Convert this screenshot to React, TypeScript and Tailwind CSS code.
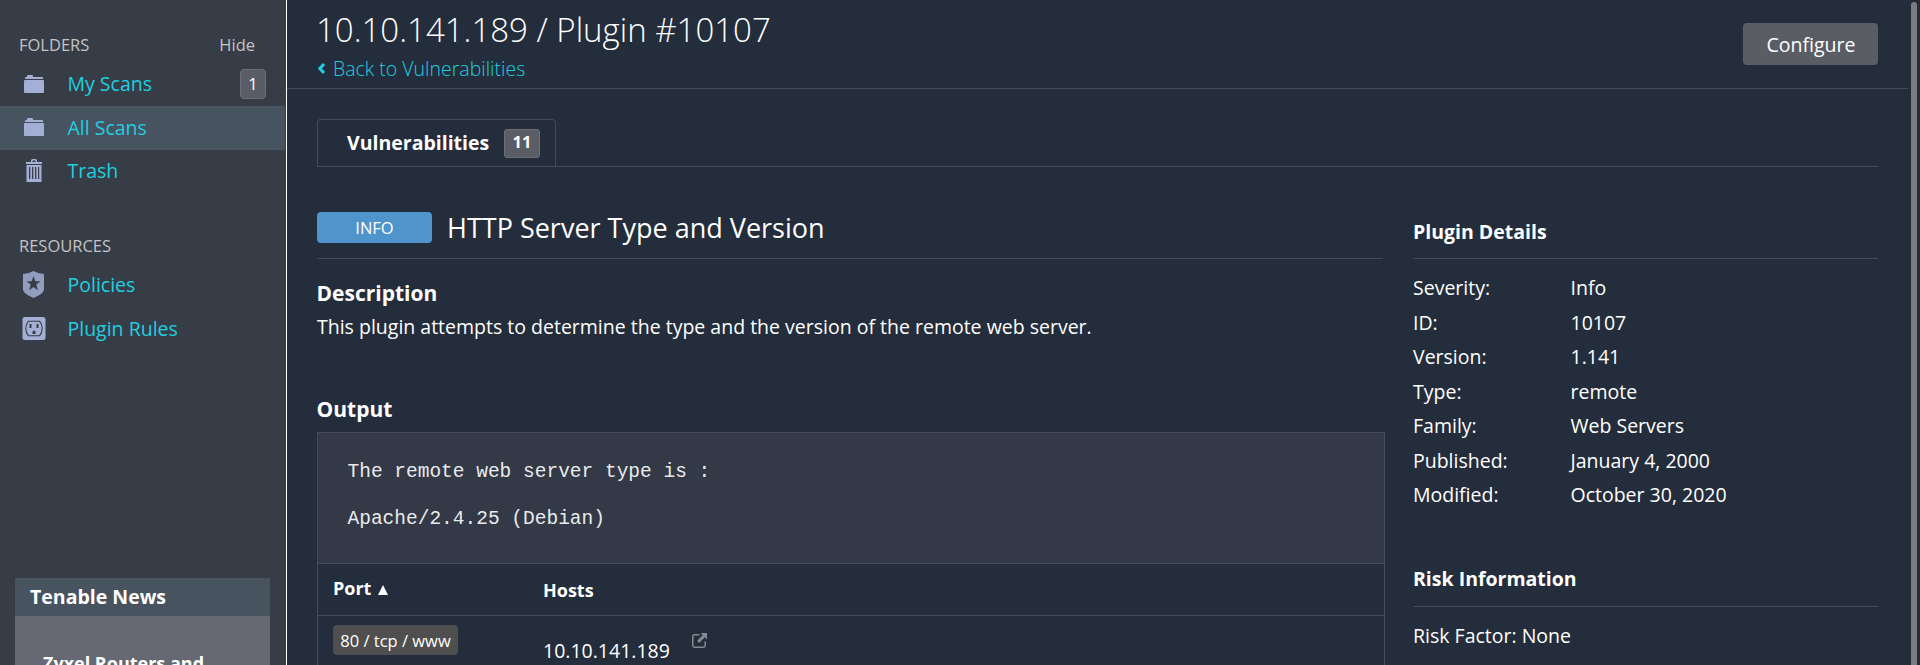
import type { ReactNode } from "react";

const details = [
  ["Severity:", "Info"],
  ["ID:", "10107"],
  ["Version:", "1.141"],
  ["Type:", "remote"],
  ["Family:", "Web Servers"],
  ["Published:", "January 4, 2000"],
  ["Modified:", "October 30, 2020"],
];

function FolderIcon() {
  return (
    <svg width="20" height="18" viewBox="0 0 20 18" fill="#a3afd5">
      <path d="M1 4V2.6Q1 2 1.7 2H3V1Q3 0 4 0H8Q9 0 9 1V2H18.3Q19 2 19 2.6V4Z" />
      <path d="M0 6Q0 5 1 5H19Q20 5 20 6V17Q20 18 19 18H1Q0 18 0 17Z" />
    </svg>
  );
}

function TrashIcon() {
  return (
    <svg width="16" height="23" viewBox="0 0 16 23" fill="#a3afd5">
      <path fillRule="evenodd" d="M5 3V1.5Q5 0 6.5 0H9.500Q11 0 11 1.500V3H16V5H0V3ZM6.500 3H9.500V1.500H6.500Z" />
      <path fillRule="evenodd" d="M0.500 6H15.500V23H0.500ZM3 8V20H4.300V8ZM6 8V20H7.300V8ZM9 8V20H10.300V8ZM12 8V20H13.200V8Z" />
    </svg>
  );
}

function ShieldIcon() {
  return (
    <svg width="21" height="27" viewBox="0 0 21 27" fill="#919cbf">
      <path
        fillRule="evenodd"
        d="M10.500 0Q15 2.600 21 3V19Q20 22 16 24.300L10.500 27L5 24.300Q1 22 0 19V3Q6 2.600 10.500 0ZM10.500 5L8.700 10.300H3.500L7.700 13.600L6.200 19.300L10.500 16L14.800 19.300L13.300 13.600L17.500 10.300H12.300Z"
      />
    </svg>
  );
}

function OutletIcon() {
  return (
    <svg width="24" height="23" viewBox="0 0 24 23" fill="none">
      <rect x="0.500" width="23" height="23" rx="2.500" fill="#a3afd5" />
      <path d="M6.500 4.200H17.500Q20.200 7.200 20.200 11.500T17.500 18.800H6.500Q3.800 15.800 3.800 11.500T6.500 4.200Z" stroke="#373d47" strokeWidth="1.100" />
      <path d="M7.500 7H9.500V11H7.500ZM14.500 7H16.500V11H14.500ZM10.500 17V15A1.500 1.500 0 0 1 13.500 15V17Z" fill="#373d47" />
    </svg>
  );
}

function NavItem({ icon, label, count, active }: { icon: ReactNode; label: string; count?: string; active?: boolean }) {
  return (
    <a className={`flex h-[43.5px] w-[285px] items-center pr-[19px] text-[#1fcfe0] ${active ? "bg-[#485360]" : ""}`}>
      <span className="flex w-[67.500px] shrink-0 justify-center pb-px">{icon}</span>
      <span className="flex-1 pb-[0.5px]">{label}</span>
      {count && (
        <span className="flex h-[30px] w-[26px] items-center justify-center rounded-[4px] border border-[#6c6d76] bg-[#5b5d66] text-[16.5px] text-white">
          {count}
        </span>
      )}
    </a>
  );
}

function Sidebar() {
  return (
    <aside className="flex h-full w-[287px] shrink-0 flex-col border-r border-white bg-[#373d47]">
      <div className="mt-[29px] flex h-[33.500px] shrink-0 justify-between pr-[31px] pl-[19px] text-[16.5px] leading-[32px] text-[#c3c3c3]">
        <span>FOLDERS</span>
        <span>Hide</span>
      </div>
      <nav className="shrink-0">
        <NavItem icon={<FolderIcon />} label="My Scans" count="1" />
        <NavItem icon={<FolderIcon />} label="All Scans" active />
        <NavItem icon={<TrashIcon />} label="Trash" />
      </nav>
      <div className="mt-[37px] h-[33.25px] shrink-0 pl-[19px] text-[16.5px] leading-[32px] text-[#c3c3c3]">RESOURCES</div>
      <nav className="shrink-0">
        <NavItem icon={<ShieldIcon />} label="Policies" />
        <NavItem icon={<OutletIcon />} label="Plugin Rules" />
      </nav>
      <section className="mt-[227.75px] ml-[15px] h-[87px] w-[255px] shrink-0 overflow-hidden bg-[#666873] font-bold text-white">
        <h3 className="h-[38px] bg-[#485360] pl-[15px] leading-[37px]">Tenable News</h3>
        <p className="pt-[27px] pl-[28px] text-[18px] leading-[40px]">Zyxel Routers and</p>
      </section>
    </aside>
  );
}

function Header() {
  return (
    <header className="flex h-[89px] justify-between border-b border-[#444b57] pr-[30px] pl-[30px]">
      <div className="font-light">
        <h1 className="-ml-px h-[51px] pt-[8px] text-[33px] leading-[44px] text-white">10.10.141.189 / Plugin #10107</h1>
        <a className="flex items-center gap-[8px] pl-px leading-[35px] text-[#1fcfe0]">
          <svg width="7" height="11" viewBox="0 0 7 11" fill="none" stroke="#1fcfe0" strokeWidth="3">
            <path d="M6 1L1.800 5.500L6 10" />
          </svg>
          Back to Vulnerabilities
        </a>
      </div>
      <button className="mt-[23px] h-[42px] w-[135px] rounded-[4px] bg-[#5b5d65] pt-0.5 pl-px text-[19.5px] text-white">Configure</button>
    </header>
  );
}

function OutputPanel() {
  return (
    <div className="h-[240px] w-[1068px] border border-b-0 border-[#444b57]">
      <pre className="h-[131px] border-b border-[#444b57] bg-[#333947] pt-[27.5px] pl-[29.5px] font-['Liberation_Mono',monospace] text-[19.5px] leading-[23.5px] text-[#e9eaec]">
        {"The remote web server type is :\n\nApache/2.4.25 (Debian)"}
      </pre>
      <div className="flex h-[52px] border-b border-[#444b57] pl-[15px] text-[18px] font-bold">
        <div className="flex w-[210px] items-center gap-[7px] pb-[3px]">
          Port
          <svg width="10" height="10" viewBox="0 0 10 10" fill="#fff" className="mt-[3px]">
            <path d="M5 0L10 10H0Z" />
          </svg>
        </div>
        <div className="leading-[52px]">Hosts</div>
      </div>
      <div className="flex pl-[15px]">
        <div className="w-[210px] pt-[9px]">
          <span className="flex h-[30px] w-[125px] items-center justify-center rounded-[4px] bg-[#4f4f4f] pt-0.5 text-[16.5px]">80 / tcp / www</span>
        </div>
        <div className="w-[149px] pt-[20px] leading-[29px]">10.10.141.189</div>
        <svg width="15" height="15" viewBox="0 0 15 15" fill="none" className="mt-[17px]">
          <path d="M7.500 1.800H2.500Q0.800 1.800 0.800 3.500V12.500Q0.800 14.200 2.500 14.200H11.500Q13.200 14.200 13.200 12.500V8.500" stroke="#868b93" strokeWidth="1.500" />
          <path d="M8.500 0H15V6.500L12.800 4.300L7.200 9.900L5.100 7.800L10.700 2.200Z" fill="#868b93" />
        </svg>
      </div>
    </div>
  );
}

export default function App() {
  return (
    <div className="flex h-[665px] w-[1920px] overflow-hidden bg-[#242d3b] font-['Open_Sans',sans-serif] text-[19.5px] text-white">
      <Sidebar />
      <main className="flex-1">
        <Header />
        <div className="mt-[30px] ml-[30px] w-[1561px]">
          <div className="flex h-12 border-b border-[#444b57]">
            <div className="flex h-[47px] w-[239px] items-center rounded-t-[4px] border border-b-0 border-[#444b57] pl-[29px] font-bold">
              <span className="w-[157px]">Vulnerabilities</span>
              <span className="flex h-[29px] w-9 items-center justify-center rounded-[3px] border border-[#6c6d76] bg-[#5b5d66] pb-px text-[16.5px]">11</span>
            </div>
          </div>
          <div className="flex gap-[30px]">
            <section className="w-[1066px] shrink-0">
              <div className="flex h-[92px] items-center gap-[15px] border-b border-[#444b57] pt-[29px]">
                <span className="flex h-[31px] w-[115px] items-center justify-center rounded-[4px] bg-[#4f94cb] pt-[2px] text-[16.5px]">INFO</span>
                <h2 className="pt-0.5 text-[27px] leading-8">HTTP Server Type and Version</h2>
              </div>
              <h4 className="-ml-px h-[51px] pt-[18px] pl-[0.5px] text-[21px] leading-[32px] font-bold">Description</h4>
              <p className="leading-[34px]">This plugin attempts to determine the type and the version of the remote web server.</p>
              <h4 className="mt-[49px] -ml-px h-[39px] pl-[0.5px] text-[21px] leading-[32px] font-bold">Output</h4>
              <OutputPanel />
            </section>
            <aside className="w-[465px]">
              <h4 className="h-[92px] border-b border-[#444b57] pt-[48px] leading-[34px] font-bold">Plugin Details</h4>
              <dl className="mt-[12px]">
                {details.map(([name, value]) => (
                  <div key={name} className="flex h-[34.5px] leading-[34.5px]">
                    <dt className="w-[157.5px]">{name}</dt>
                    <dd>{value}</dd>
                  </div>
                ))}
              </dl>
              <h4 className="mt-[48px] h-[46px] border-b border-[#444b57] leading-[36px] font-bold">Risk Information</h4>
              <p className="pt-[11px] leading-[35px]">Risk Factor: None</p>
            </aside>
          </div>
        </div>
      </main>
      <div className="flex h-full w-3 justify-center bg-[#262b37] pt-[2px]">
        <div className="h-full w-1.5 rounded-t-full bg-[#7b7c82]" />
      </div>
    </div>
  );
}
